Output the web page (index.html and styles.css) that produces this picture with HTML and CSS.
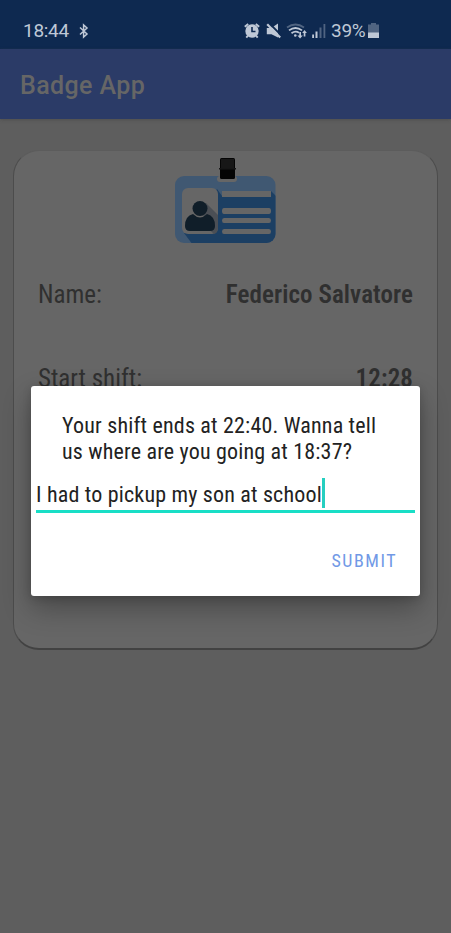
FILE: index.html
```
<!DOCTYPE html>
<html lang="en">
<head>
<meta charset="utf-8">
<title>Badge App</title>
<link rel="stylesheet" href="styles.css">
</head>
<body>
<header class="status">
  <span class="clock">18:44</span>
  <svg class="bluetooth" width="10" height="16" viewBox="0 0 10 16"><path d="M1 4.500 8 11 4.600 14V2L8 5 1 11.500" fill="none" stroke="currentColor" stroke-width="1.500"/></svg>
  <svg class="icons" width="86" height="18" viewBox="0 0 86 18" fill="currentColor">
    <circle cx="8" cy="9" r="6.700"/>
    <path d="M.8 4.800 4.200 2M15.200 4.800 11.800 2M4 13.500 2.300 15.700M12 13.500l1.700 2.200" stroke="currentColor" stroke-width="1.900"/>
    <path d="M8 5v4.500h3.500" fill="none" stroke="#0e2950" stroke-width="1.600"/>
    <path d="M22.800 6h4.500l6.700-4.500V15.500L27.500 12.300h-4.700z"/>
    <path d="m24.500 .5 13 13" stroke="#0e2950" stroke-width="1.800"/>
    <path d="m23.200 2.200 13 13.200" stroke="currentColor" stroke-width="2.200"/>
    <path d="M43 5.500q8.500-6 17 0" fill="none" stroke="#506481" stroke-width="1.800"/>
    <path d="M45 8.400q6.500-4.800 13 0M47.500 11.300q4-3 7.500-.5" fill="none" stroke="currentColor" stroke-width="1.800"/>
    <circle cx="51.300" cy="13.500" r="1.300"/>
    <path d="M55.300 10h1.700v3.500h1.800l-2.700 3-2.700-3h1.900zM59.700 14.500h1.700V11h1.500L60.500 8l-2.300 3h1.500z"/>
    <path d="M68.200 12.500h1.800V16h-1.800zM71.500 9.500h2V16h-2z"/>
    <path d="M75.500 5.500h2V16h-2zM79.500 2h1.800v14h-1.800z" fill="#506481"/>
  </svg>
  <span class="percent">39%</span>
  <svg class="battery" width="12" height="16" viewBox="0 0 12 16"><path d="M3 0h5v1.500h3V10H0V1.500h3z" fill="#506481"/><path d="M0 9.500h11v5.500H0z" fill="currentColor"/></svg>
</header>
<div class="appbar"><h1>Badge App</h1></div>
<main>
  <section class="card">
    <svg class="badge" width="102" height="88" viewBox="0 0 102 88">
      <defs><clipPath id="b"><rect x="0" y="19" width="100.500" height="67" rx="9"/></clipPath></defs>
      <g clip-path="url(#b)">
        <path fill="#405872" d="M0 19h101v67H0z"/>
        <path fill="#1c3f63" d="m42 32 5 7h49v-5l6 6v48H18L9 76z"/>
      </g>
      <rect x="42" y="19" width="20" height="6" rx="3" fill="#666"/>
      <rect x="7" y="31" width="36" height="46" rx="6" fill="#666"/>
      <path fill="#4b4f55" d="m31 46 12 12v13q0 5-4 6L27 66z"/>
      <circle cx="25" cy="51.500" r="7.500" fill="#101e29"/>
      <path fill="#101e29" d="M18 57q7 7 14 0 8 2 8 12 0 5-5 5H15q-5 0-5-5 0-10 8-12z"/>
      <path fill="#666" d="M47 34h49v6H47zM49 51h45q2 0 2 3t-2 3H49q-2 0-2-3t2-3zM49 61h45q2 0 2 2.500T94 66H49q-2 0-2-2.500t2-2.500zM49 72h45q2 0 2 2.500T94 77H49q-2 0-2-2.500t2-2.500z"/>
      <rect x="45" y="1" width="15" height="21" rx="1.500" fill="#050505"/>
      <path d="M46 2h13v9H46z" fill="#171717"/>
      <path d="M44 11h17v1.500H44z" fill="#151515"/>
    </svg>
    <div class="row name"><span>Name:</span><strong>Federico Salvatore</strong></div>
    <div class="row"><span>Start shift:</span><strong>12:28</strong></div>
  </section>
</main>
<div class="dialog" role="dialog">
  <p class="message">Your shift ends at 22:40. Wanna tell<br>us where are you going at 18:37?</p>
  <div class="field"><span>I had to pickup my son at school</span><i class="caret"></i></div>
  <button class="submit">SUBMIT</button>
</div>
</body>
</html>
```
FILE: styles.css
```
* { box-sizing: border-box; }
body {
  margin: 0;
  height: 933px;
  overflow: hidden;
  background: #5e5e5e;
  font-family: "Roboto Condensed", Roboto, sans-serif;
  font-stretch: 75%;
}
.status {
  display: flex;
  align-items: center;
  height: 49px;
  padding: 12px 0 0 23px;
  background: #0e2950;
  color: #bfc8d6;
  font: 400 19px/24px Roboto, sans-serif;
}
.clock { width: 56px; letter-spacing: -.3px; }
.icons { margin-left: 155px; }
.percent { margin-left: 1px; width: 37px; white-space: nowrap; letter-spacing: -.3px; }
.battery { flex: none; }
.appbar {
  display: flex;
  align-items: center;
  height: 70px;
  padding-left: 20px;
  background: #2b3b67;
  box-shadow: 0 1px 3px #4448;
}
h1 {
  margin: 3px 0 0;
  color: #666;
  font: 500 25px/30px Roboto, sans-serif;
  letter-spacing: .4px;
}
main { padding: 31px 13px 0; }
.card {
  height: 500px;
  padding: 6px 24px 0;
  border: 1px solid #4c4c4c;
  border-top-color: #5c5c5c;
  border-bottom: 2px solid #424242;
  border-radius: 26px;
  background: #666;
}
.badge { display: block; margin: 0 0 0 137px; }
.row {
  display: flex;
  justify-content: space-between;
  height: 84px;
  color: #303030;
  font-size: 25px;
  line-height: 30px;
}
.name { margin-top: 35px; }
.row strong { font-weight: 600; letter-spacing: .1px; }
.dialog {
  position: absolute;
  left: 31px;
  top: 386px;
  width: 389px;
  height: 210px;
  padding: 26px 5px 0;
  display: flex;
  flex-direction: column;
  border-radius: 3px;
  background: #fff;
  color: #222;
  font-size: 22px;
  letter-spacing: .18px;
  box-shadow: 0 12px 28px rgba(0,0,0,.3), 0 2px 9px rgba(0,0,0,.16);
}
.message { margin: 1px 0 0 26px; line-height: 26px; white-space: nowrap; }
.field {
  display: flex;
  align-items: center;
  height: 36px;
  margin-top: 12px;
  padding-top: 1px;
  border-bottom: 3px solid #18dec6;
  white-space: nowrap;
}
.caret { width: 3px; height: 30px; margin-top: -3px; background: #25cfc0; }
.submit {
  align-self: flex-end;
  margin: 36px 18px 0 0;
  padding: 0;
  border: 0;
  background: none;
  color: #7199e6;
  font: inherit;
  font-size: 18px;
  line-height: 24px;
  letter-spacing: 1.500px;
}
```
